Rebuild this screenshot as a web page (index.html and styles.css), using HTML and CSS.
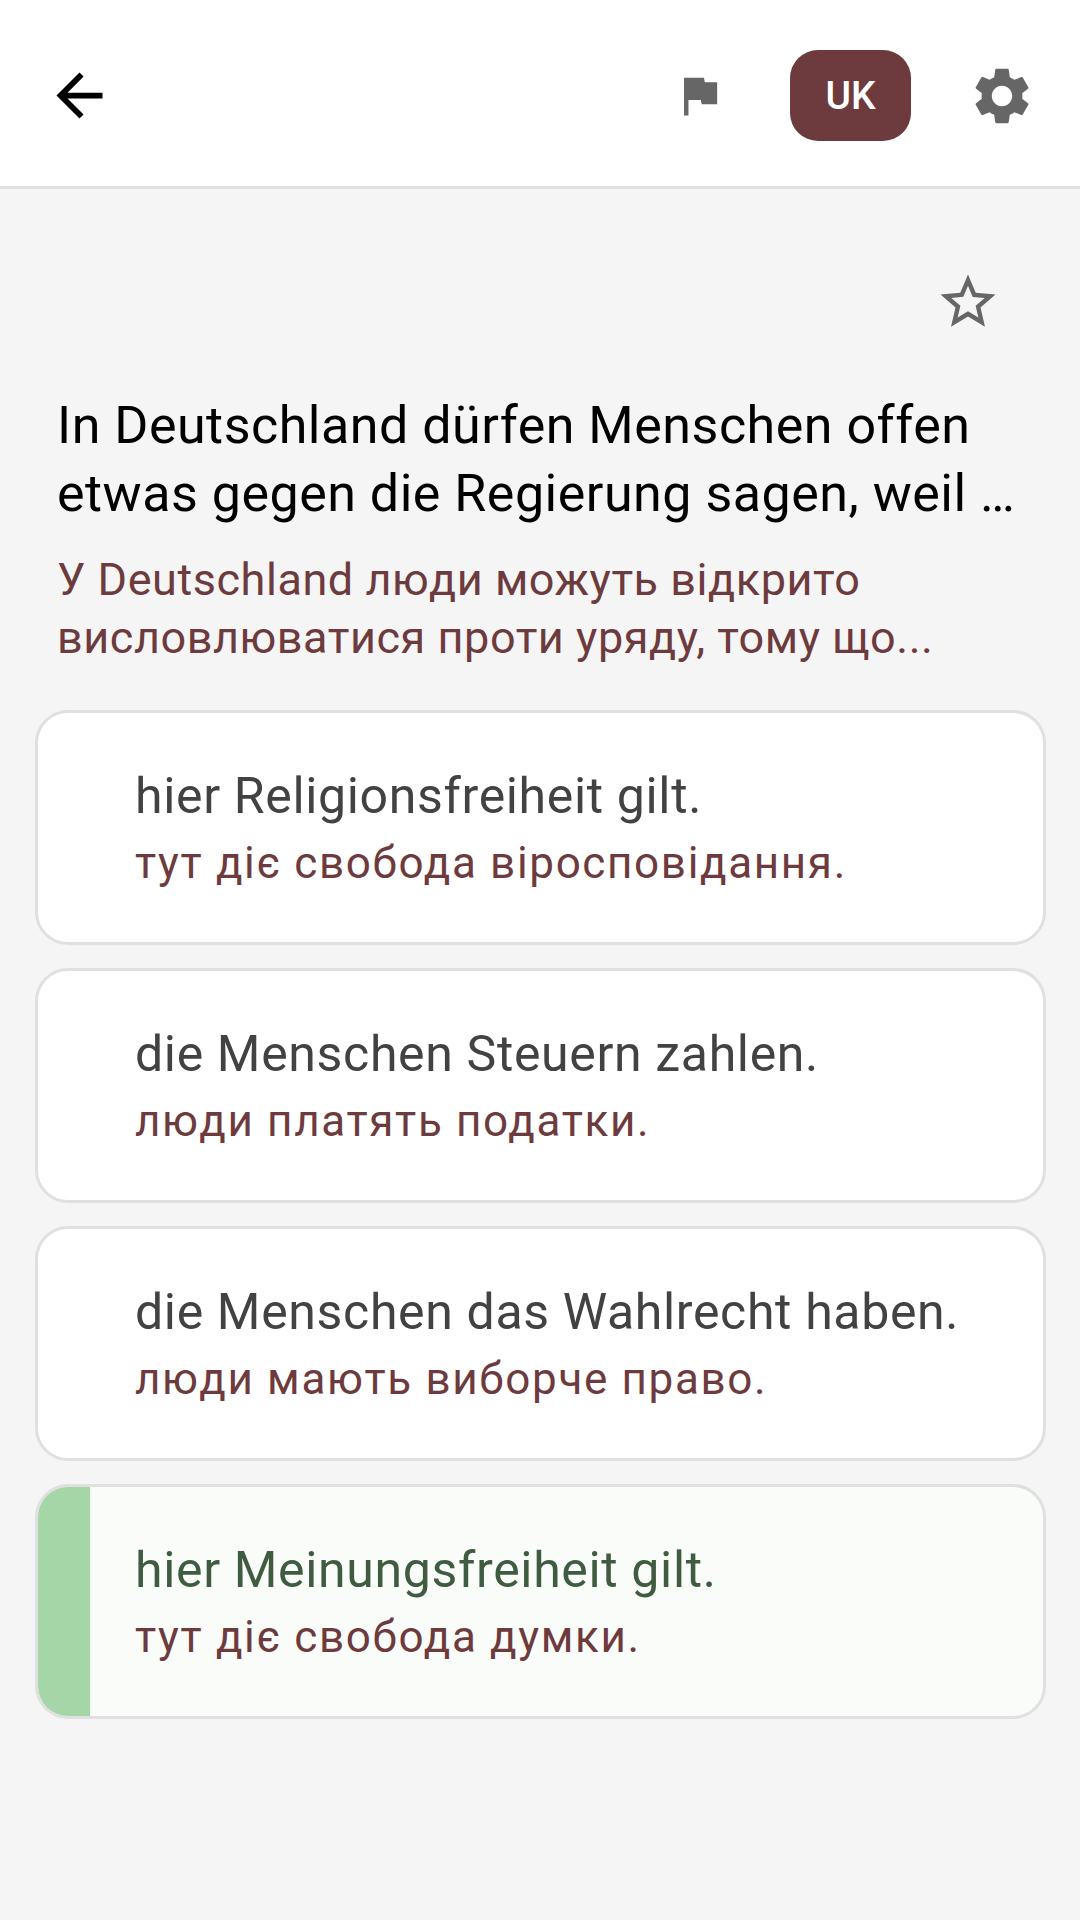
FILE: index.html
```html
<!DOCTYPE html>
<html lang="de">
<head>
<meta charset="utf-8">
<title>Frage</title>
<link rel="stylesheet" href="styles.css">
</head>
<body>
<header class="topbar">
  <svg class="icon icon-back" viewBox="0 0 24 24"><path d="M20 11H7.83l5.59-5.59L12 4l-8 8 8 8 1.41-1.41L7.83 13H20v-2z"/></svg>
  <svg class="icon-flag" viewBox="0 0 24 24"><path d="M14.4 6L14 4H5v17h2v-7h5.6l.4 2h7V6z"/></svg>
  <div class="lang">UK</div>
  <svg class="icon icon-gear" viewBox="0 0 24 24"><path d="M19.14 12.94c.04-.3.06-.61.06-.94 0-.32-.02-.64-.07-.94l2.03-1.58c.18-.14.23-.41.12-.61l-1.92-3.32c-.12-.22-.37-.29-.59-.22l-2.39.96c-.5-.38-1.03-.7-1.62-.94l-.36-2.54c-.04-.24-.24-.41-.48-.41h-3.84c-.24 0-.43.17-.47.41l-.36 2.54c-.59.24-1.13.57-1.62.94l-2.39-.96c-.22-.08-.47 0-.59.22L2.74 8.87c-.12.21-.08.47.12.61l2.03 1.58c-.05.3-.09.63-.09.94s.02.64.07.94l-2.03 1.58c-.18.14-.23.41-.12.61l1.92 3.32c.12.22.37.29.59.22l2.39-.96c.5.38 1.03.7 1.62.94l.36 2.54c.05.24.24.41.48.41h3.84c.24 0 .44-.17.47-.41l.36-2.54c.59-.24 1.13-.56 1.62-.94l2.39.96c.22.08.47 0 .59-.22l1.92-3.32c.12-.22.07-.47-.12-.61l-2.01-1.58zM12 15.6c-1.98 0-3.6-1.62-3.6-3.6s1.62-3.6 3.6-3.6 3.6 1.62 3.6 3.6-1.62 3.6-3.6 3.6z"/></svg>
</header>
<main class="content">
  <div class="star-row">
    <svg class="icon icon-star" viewBox="0 0 24 24"><path d="M22 9.24l-7.19-.62L12 2 9.19 8.63 2 9.24l5.46 4.73L5.82 21 12 17.27 18.18 21l-1.63-7.03L22 9.24zM12 15.4l-3.76 2.27 1-4.28-3.32-2.88 4.38-.38L12 6.1l1.71 4.04 4.38.38-3.32 2.88 1 4.28L12 15.4z"/></svg>
  </div>
  <section class="question">
    <h1 class="q-de">In Deutschland dürfen Menschen offen etwas gegen die Regierung sagen, weil …</h1>
    <p class="q-uk">У Deutschland люди можуть відкрито висловлюватися проти уряду, тому що...</p>
  </section>
  <ul class="answers">
    <li class="card"><div class="card-body"><span class="a-de">hier Religionsfreiheit gilt.</span><span class="a-uk">тут діє свобода віросповідання.</span></div></li>
    <li class="card"><div class="card-body"><span class="a-de">die Menschen Steuern zahlen.</span><span class="a-uk">люди платять податки.</span></div></li>
    <li class="card"><div class="card-body"><span class="a-de">die Menschen das Wahlrecht haben.</span><span class="a-uk">люди мають виборче право.</span></div></li>
    <li class="card card-correct"><div class="card-mark"></div><div class="card-body"><span class="a-de">hier Meinungsfreiheit gilt.</span><span class="a-uk">тут діє свобода думки.</span></div></li>
  </ul>
</main>
</body>
</html>
```
FILE: styles.css
```css
* { box-sizing: border-box; }
html, body { margin: 0; padding: 0; }
body {
  width: 1080px;
  height: 1920px;
  overflow: hidden;
  background: #f5f5f5;
  font-family: Roboto, "Noto Sans", sans-serif;
}
.topbar {
  height: 189px;
  background: #fff;
  border-bottom: 3px solid #e0e0e0;
  display: flex;
  align-items: center;
  padding: 5px 44px 0 45px;
}
.icon { width: 66px; height: 66px; display: block; flex: none; fill: #666; }
.icon-back { width: 69px; height: 69px; fill: #000; margin-right: auto; }
.icon-flag { width: 53px; height: 53px; display: block; flex: none; fill: #666; margin-right: 64px; }
.icon-gear { width: 68px; height: 68px; }
.lang {
  width: 121px;
  height: 91px;
  border-radius: 28px;
  background: #6d3b3d;
  color: #fff;
  font-size: 39px;
  font-weight: 500;
  display: flex;
  align-items: center;
  justify-content: center;
  margin-right: 57px;
}
.content { padding: 0 34px 0 35px; }
.star-row { display: flex; justify-content: flex-end; padding: 80px 45px 0 0; }
.question { padding: 57px 22px 0; }
.q-de {
  margin: 0;
  font-size: 52px;
  font-weight: 400;
  line-height: 68px;
  letter-spacing: 0.5px;
  color: #000;
}
.q-uk {
  margin: 23px 0 0;
  font-size: 45px;
  line-height: 58px;
  letter-spacing: 0.55px;
  color: #6d3b3d;
}
.answers {
  list-style: none;
  margin: 43px 0 0;
  padding: 0;
  display: flex;
  flex-direction: column;
  gap: 23px;
}
.card {
  height: 235px;
  background: #fff;
  border: 3px solid #e0e0e0;
  border-radius: 33px;
  display: flex;
  overflow: hidden;
}
.card-body {
  flex: 1;
  padding: 0 0 1px 97px;
  display: flex;
  flex-direction: column;
  justify-content: center;
}
.a-de { font-size: 50px; line-height: 68px; letter-spacing: 0.65px; color: #424242; }
.a-uk { font-size: 44px; line-height: 58px; letter-spacing: 1.65px; color: #6d3b3d; margin-top: 4px; }
.card-correct { background: #fafcf9; }
.card-correct .card-body { padding-left: 45px; }
.card-correct .a-de { color: #3f5c40; }
.card-mark { width: 52px; flex: none; background: #a5d6a7; }
```
